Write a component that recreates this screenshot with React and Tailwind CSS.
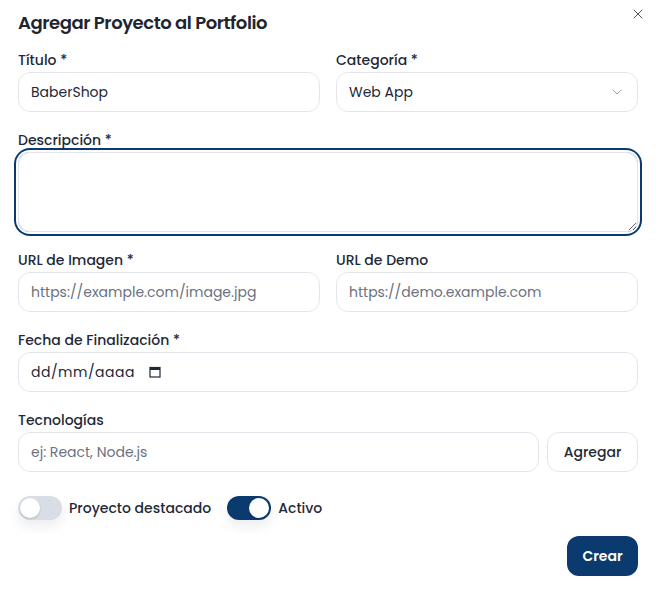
import React, { useState } from 'react';
import { X, ChevronDown } from 'lucide-react';

function Field({ label, children, className = '' }) {
	return (
		<div className={className}>
			<label className="block h-6 text-sm leading-6 font-medium text-[#1f2937]">{label}</label>
			{children}
		</div>
	);
}

function Switch({ on, onChange }) {
	return (
		<button
			type="button"
			onClick={() => onChange(!on)}
			className={`flex h-6 w-11 items-center rounded-full p-[2px] shadow-[0_6px_12px_rgba(15,23,42,0.08)] ${on ? 'bg-[#0b3b6e] justify-end' : 'bg-[#d9dee6] justify-start'}`}>
			<span className="h-5 w-5 rounded-full bg-white shadow-[0_1px_2px_rgba(15,23,42,0.2)]" />
		</button>
	);
}

const inputCls =
	'h-10 w-full rounded-xl border border-[#e2e6ec] bg-white px-3 text-sm text-[#1f2937] placeholder:text-[#6b7280] outline-none';

export default function App() {
	const [featured, setFeatured] = useState(false);
	const [active, setActive] = useState(true);

	return (
		<div className="relative h-[595px] w-[660px] bg-white pl-[18px] pr-[22px] pt-[9px] font-['Poppins','Inter',sans-serif] text-[#1f2937]">
			<button className="absolute right-[14px] top-[6px] text-[#4b5563]">
				<X className="h-4 w-4" strokeWidth={1.5} />
			</button>
			<h2 className="h-7 text-lg leading-7 font-semibold tracking-tight text-[#1e2530]">Agregar Proyecto al Portfolio</h2>

			<div className="mt-[11px] flex flex-col gap-4">
				<div className="grid grid-cols-2 gap-4">
					<Field label="Título *">
						<input className={inputCls} defaultValue="BaberShop" />
					</Field>
					<Field label="Categoría *">
						<div className={`${inputCls} flex items-center justify-between`}>
							<span>Web App</span>
							<ChevronDown className="h-4 w-4 text-[#9ca3af]" strokeWidth={1.5} />
						</div>
					</Field>
				</div>

				<Field label="Descripción *">
					<textarea className="block h-20 w-full resize-y rounded-xl border border-[#e2e6ec] px-3 py-2 text-sm outline-none ring-2 ring-[#0b3b6e] ring-offset-2" />
				</Field>

				<div className="grid grid-cols-2 gap-4">
					<Field label="URL de Imagen *">
						<input className={inputCls} placeholder="https://example.com/image.jpg" />
					</Field>
					<Field label="URL de Demo">
						<input className={inputCls} placeholder="https://demo.example.com" />
					</Field>
				</div>

				<Field label="Fecha de Finalización *">
					<div className={`${inputCls} flex items-center gap-[14px]`}>
						<span className="tracking-[0.5px]">dd/mm/aaaa</span>
						<svg width="12" height="12" viewBox="0 0 12 12" fill="none">
							<rect x="1" y="1.5" width="10" height="9.5" stroke="#1f2937" strokeWidth="1.2" />
							<rect x="1" y="1.5" width="10" height="2.5" fill="#1f2937" />
						</svg>
					</div>
				</Field>

				<Field label="Tecnologías">
					<div className="flex gap-2">
						<input className={`${inputCls} flex-1`} placeholder="ej: React, Node.js" />
						<button className="h-10 w-[91px] shrink-0 rounded-xl border border-[#e2e6ec] text-sm font-medium text-[#1f2937]">
							Agregar
						</button>
					</div>
				</Field>

				<div className="mt-2 flex items-center">
					<Switch on={featured} onChange={setFeatured} />
					<span className="ml-[7px] text-sm font-medium">Proyecto destacado</span>
					<div className="ml-4">
						<Switch on={active} onChange={setActive} />
					</div>
					<span className="ml-[7px] text-sm font-medium">Activo</span>
				</div>

				<div className="flex justify-end">
					<button className="h-10 w-[71px] rounded-xl bg-[#0b3b6e] text-sm font-semibold text-white">Crear</button>
				</div>
			</div>
		</div>
	);
}
